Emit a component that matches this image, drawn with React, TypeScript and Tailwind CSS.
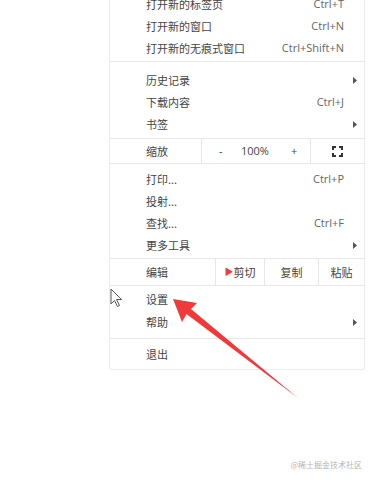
import React from 'react'

const cjk = { fontFamily: '"Noto Sans CJK SC", "Noto Sans", sans-serif' }

interface Item {
  label: string
  shortcut?: string
  sub?: boolean
}

function SubArrow() {
  return (
    <svg width="4" height="7" viewBox="0 0 4 7" className="fill-[#555]">
      <path d="M0 0 L4 3.5 L0 7 Z" />
    </svg>
  )
}

function Row({ item, h = 'h-[22px]' }: { item: Item; h?: string }) {
  return (
    <div className={`flex items-center justify-between pl-[36px] ${item.sub ? 'pr-[7px]' : 'pr-[20px]'} ${h}`}>
      <span>{item.label}</span>
      {item.shortcut && <span className="text-[#666]" style={{ fontFamily: '"Open Sans", "Liberation Sans", sans-serif' }}>{item.shortcut}</span>}
      {item.sub && <SubArrow />}
    </div>
  )
}

function Sep() {
  return <div className="h-px bg-[#e8e8e8]" />
}

const groupA: Item[] = [
  { label: '打开新的标签页', shortcut: 'Ctrl+T' },
  { label: '打开新的窗口', shortcut: 'Ctrl+N' },
  { label: '打开新的无痕式窗口', shortcut: 'Ctrl+Shift+N' },
]
const groupB: Item[] = [
  { label: '历史记录', sub: true },
  { label: '下载内容', shortcut: 'Ctrl+J' },
  { label: '书签', sub: true },
]
const groupC: Item[] = [
  { label: '打印...', shortcut: 'Ctrl+P' },
  { label: '投射...' },
  { label: '查找...', shortcut: 'Ctrl+F' },
  { label: '更多工具', sub: true },
]

export default function App() {
  return (
    <div className="relative h-[480px] w-[368px] overflow-hidden bg-white text-[11px] text-[#444]" style={cjk}>
      <div className="-mt-[7px] ml-[109px] w-[256px] rounded-b-[3px] border-x border-b border-[#ececec] bg-white">
        <div className="pb-[2px]">
          {groupA.map((it) => (
            <Row key={it.label} item={it} />
          ))}
        </div>
        <Sep />
        <div className="pb-[3px] pt-[7px]">
          {groupB.map((it) => (
            <Row key={it.label} item={it} />
          ))}
        </div>
        <Sep />
        <div className="flex h-[24px] items-center">
          <div className="flex h-full w-[91px] items-center pl-[36px]">缩放</div>
          <div className="flex h-full w-[110px] items-center border-x border-[#e8e8e8] pl-[17px]" style={{ fontFamily: '"Open Sans", "Liberation Sans", sans-serif' }}>
            <span className="w-[22px]">-</span>
            <span className="w-[50px]">100%</span>
            <span>+</span>
          </div>
          <div className="flex h-full flex-1 items-center justify-center">
            <svg width="11" height="11" viewBox="0 0 11 11" fill="none" stroke="#333" strokeWidth="2">
              <path d="M1 4 V1 H4 M7 1 H10 V4 M10 7 V10 H7 M4 10 H1 V7" />
            </svg>
          </div>
        </div>
        <Sep />
        <div className="pb-[2px] pt-[4px]">
          {groupC.map((it) => (
            <Row key={it.label} item={it} />
          ))}
        </div>
        <Sep />
        <div className="flex h-[26px] items-center">
          <div className="flex h-full w-[105px] items-center pl-[36px]">编辑</div>
          <div className="flex h-full w-[49px] items-center justify-center border-l border-[#e8e8e8]">
            <span className="text-[9px] text-[#f23a3a]">▶</span>
            <span>剪切</span>
          </div>
          <div className="flex h-full w-[54px] items-center justify-center border-l border-[#e8e8e8]">复制</div>
          <div className="flex h-full flex-1 items-center justify-center border-l border-[#e8e8e8]">粘贴</div>
        </div>
        <Sep />
        <div className="pb-[4px] pt-[2px]">
          <Row item={{ label: '设置' }} h="h-[23px]" />
          <Row item={{ label: '帮助', sub: true }} h="h-[23px]" />
        </div>
        <Sep />
        <div className="py-[7px]">
          <Row item={{ label: '退出' }} h="h-[16px]" />
        </div>
      </div>

      <div className="mr-[6px] mt-[89px] text-right text-[8px] text-[#b5b5b5]">@稀土掘金技术社区</div>

      {/* mouse cursor */}
      <svg className="absolute left-[110px] top-[288px]" width="14" height="20" viewBox="0 0 14 20">
        <path d="M1 1 L1 16 L4.5 12.5 L7.5 18.5 L9.5 17.5 L6.5 11.5 L11.5 11.5 Z" fill="white" stroke="#555" strokeWidth="1" strokeLinejoin="round" />
      </svg>

      {/* red annotation arrow */}
      <svg className="absolute left-0 top-0" width="368" height="480" viewBox="0 0 368 480">
        <polygon points="173,299 197,303 191,309 298,398 186.5,314 182,322" fill="#f03a3a" />
      </svg>
    </div>
  )
}
